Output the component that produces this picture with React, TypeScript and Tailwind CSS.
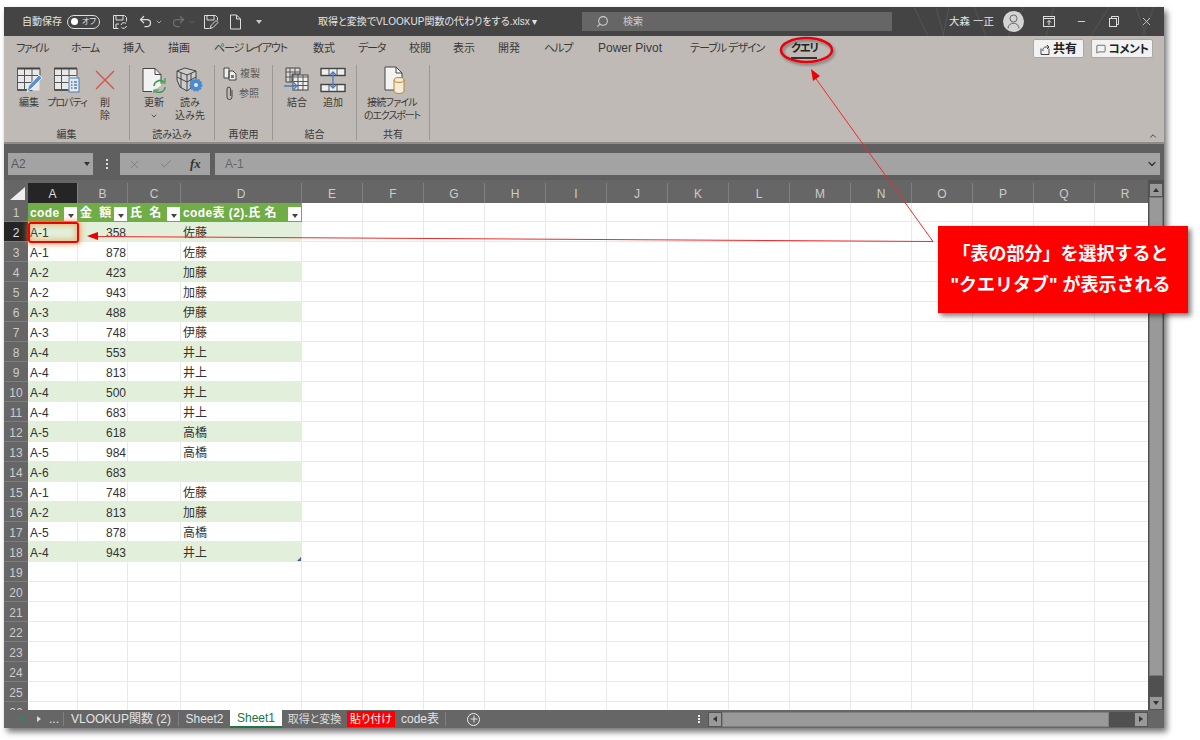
import React from "react";
import { ChevronDown, ChevronUp, Search, X, Check, Minus, Undo2, Redo2, MessageSquare, Plus } from "lucide-react";

const tabs = [
  { label: "ファイル", className: "w-[31px] ml-[12px] tracking-[-1.5px]" },
  { label: "ホーム", className: "w-[29px] ml-[24px] tracking-[-1.2px]" },
  { label: "挿入", className: "w-[22px] ml-[23px]" },
  { label: "描画", className: "w-[22px] ml-[23px]" },
  { label: "ページ レイアウト", className: "w-[74px] ml-[24px] tracking-[-1.2px]" },
  { label: "数式", className: "w-[22px] ml-[25px]" },
  { label: "データ", className: "w-[28px] ml-[23px] tracking-[-1.2px]" },
  { label: "校閲", className: "w-[22px] ml-[23px]" },
  { label: "表示", className: "w-[22px] ml-[22px]" },
  { label: "開発", className: "w-[22px] ml-[23px]" },
  { label: "ヘルプ", className: "w-[28px] ml-[24px] tracking-[-1px]" },
  { label: "Power Pivot", className: "w-[65px] ml-[26px] text-[12px]" },
  { label: "テーブル デザイン", className: "w-[76px] ml-[27px] tracking-[-1px]" },
];

const cols = [
  { name: "A", className: "w-[50px]" },
  { name: "B", className: "w-[50px]" },
  { name: "C", className: "w-[53px]" },
  { name: "D", className: "w-[121px]" },
  ..."EFGHIJKLMNOPQR".split("").map((name) => ({ name, className: "w-[61px]" })),
];

const rows: [string, string, string][] = [
  ["A-1", "358", "佐藤"],
  ["A-1", "878", "佐藤"],
  ["A-2", "423", "加藤"],
  ["A-2", "943", "加藤"],
  ["A-3", "488", "伊藤"],
  ["A-3", "748", "伊藤"],
  ["A-4", "553", "井上"],
  ["A-4", "813", "井上"],
  ["A-4", "500", "井上"],
  ["A-4", "683", "井上"],
  ["A-5", "618", "高橋"],
  ["A-5", "984", "高橋"],
  ["A-6", "683", ""],
  ["A-1", "748", "佐藤"],
  ["A-2", "813", "加藤"],
  ["A-5", "878", "高橋"],
  ["A-4", "943", "井上"],
];

const gridColor = "border-[#e9e9e9]";

function FilterButton() {
  return (
    <span className="absolute right-[1px] top-[4px] flex h-[14px] w-[13px] items-center justify-center bg-white">
      <span className="mt-[3px] h-0 w-0 border-x-[3.5px] border-t-[4px] border-x-transparent border-t-[#444]" />
    </span>
  );
}

function HeaderCell({ label, className }: { label: string; className: string }) {
  return (
    <div className={`relative flex h-full shrink-0 items-center bg-[#70ad47] pl-[2px] text-[12px] font-bold tracking-[0.4px] text-white ${className}`}>
      <span className="whitespace-nowrap">{label}</span>
      <FilterButton />
    </div>
  );
}

function RowHead({ n, active }: { n: number; active?: boolean }) {
  return (
    <div className={`flex h-full w-[24px] shrink-0 items-center justify-center border-b border-[#7d7d7d] pt-[2px] text-[12px] ${active ? "bg-[#252525] text-[#ddd]" : "bg-[#666] text-[#ccc]"}`}>
      {n}
    </div>
  );
}

function EmptyCells() {
  return (
    <>
      {cols.slice(4).map((c) => (
        <div key={c.name} className={`h-full shrink-0 border-r border-b ${gridColor} ${c.className}`} />
      ))}
    </>
  );
}

function EditIcon() {
  return (
    <svg width="26" height="26" viewBox="0 0 26 26" fill="none">
      <rect x="1.500" y="1.500" width="22" height="22" fill="#e9e9e9" />
      <path d="M1 1.500h23" stroke="#444" strokeWidth="2" />
      <path d="M1.500 1.500v22h15M24 1.500v7M1.500 8.500h22M1.500 15.500h17M1.500 22.500h12M8.500 2v20M16 2v15" stroke="#555" />
      <path d="M11 25l1.500-6L23 8l3 3-10.500 10.500z" fill="#5b8fd0" stroke="#fff" strokeWidth="0.800" />
    </svg>
  );
}

function PropsIcon() {
  return (
    <svg width="28" height="26" viewBox="0 0 28 26" fill="none">
      <rect x="1.500" y="1.500" width="22" height="22" fill="#e9e9e9" />
      <path d="M1 1.500h23" stroke="#444" strokeWidth="2" />
      <path d="M1.500 1.500v22h14M24 1.500v8M1.500 8.500h22M1.500 15.500h14M1.500 22.500h14M8.500 2v20M16 2v8" stroke="#555" />
      <rect x="16" y="11" width="10" height="14" fill="#e8e8e8" stroke="#4a7ebb" />
      <path d="M18 15h1.500M18 18h1.500M18 21h1.500M21 15h3M21 18h3M21 21h3" stroke="#4a7ebb" strokeWidth="1.300" />
    </svg>
  );
}

function RefreshIcon() {
  return (
    <svg width="26" height="26" viewBox="0 0 26 26" fill="none">
      <path d="M2 1.500h12l6 6v11l-9 6H2z" fill="#f2f2f2" />
      <path d="M2 1.500h12l6 6v8M14 1.500v6h6M2 1.500v23h9" stroke="#444" />
      <path d="M13 19a6 6 0 0 1 10-4M24 20a6 6 0 0 1-10 4" stroke="#3f9c4f" strokeWidth="1.600" />
      <path d="M24 11v5h-5M13 28v-5h5" stroke="#3f9c4f" strokeWidth="1.200" />
    </svg>
  );
}

function CubeIcon() {
  return (
    <svg width="28" height="26" viewBox="0 0 28 26" fill="none">
      <path d="M1 4l8-3 11 3v13l-9 7-7-4-3-7z" fill="#ccc" stroke="#444" />
      <path d="M1 4l10 4 9-4M11 8v16M1 10l10 5 9-5M5 6v15M15 6v15" stroke="#444" />
      <circle cx="20" cy="18" r="5.500" fill="#4a8bd0" stroke="#4a8bd0" strokeDasharray="2 1" strokeWidth="2" />
      <circle cx="20" cy="18" r="2" fill="#e8e8e8" />
    </svg>
  );
}

function MergeIcon() {
  return (
    <svg width="26" height="26" viewBox="0 0 26 26" fill="none">
      <path d="M2 1h14v6H8v8H2z" fill="#d8d8d8" stroke="#444" />
      <path d="M2 5h14M2 10h6M6 1v14M11 1v6" stroke="#555" />
      <rect x="9" y="8" width="15" height="15" fill="#eee" stroke="#444" />
      <path d="M9 10h15M9 14.500h15M9 18.500h15M14 8v15M19 8v15" stroke="#555" />
      <path d="M0 19h12M9 15l4 4-4 4" stroke="#4a7ebb" strokeWidth="1.300" />
    </svg>
  );
}

function AppendIcon() {
  return (
    <svg width="26" height="26" viewBox="0 0 26 26" fill="none">
      <rect x="1" y="1.500" width="24" height="7" fill="#eee" stroke="#444" strokeWidth="1.400" />
      <rect x="1" y="17.500" width="24" height="7" fill="#eee" stroke="#444" strokeWidth="1.400" />
      <path d="M9 2v6M17 2v6M9 18v6M17 18v6" stroke="#555" />
      <path d="M13 5v16M10 8l3-3 3 3M10 18l3 3 3-3" stroke="#4a7ebb" strokeWidth="1.300" />
    </svg>
  );
}

function ExportIcon() {
  return (
    <svg className="ml-[3px]" width="28" height="28" viewBox="0 0 28 28" fill="none">
      <path d="M5 1h11l6 6v17H5z" fill="#f4f4f4" />
      <path d="M5 1h11l6 6v5M16 1v6h6M5 1v23h9" stroke="#444" />
      <path d="M14 14v11c0 1.500 2.500 2.500 5 2.500s5-1 5-2.500V14z" fill="#f4ecd9" stroke="#b8862d" />
      <ellipse cx="19" cy="14" rx="5" ry="2.400" fill="#f4ecd9" stroke="#b8862d" />
    </svg>
  );
}

function RibbonButton({ icon, lines, width }: { icon: React.ReactNode; lines: React.ReactNode[]; width: string }) {
  return (
    <div className={`flex flex-col items-center ${width}`}>
      <div className="mt-[2px] flex h-[26px] items-center justify-center">{icon}</div>
      <div className="mt-[3px] text-center text-[10px] leading-[13px] text-[#3a3a3a]">
        {lines.map((l, i) => (
          <div key={i} className="whitespace-nowrap">{l}</div>
        ))}
      </div>
    </div>
  );
}

function RibbonGroup({ title, width, pad, children }: { title: string; width: string; pad: string; children: React.ReactNode }) {
  return (
    <div className={`mt-[1px] flex h-[75px] shrink-0 flex-col border-r border-[#9b9793] ${width}`}>
      <div className={`flex h-[64px] shrink-0 ${pad}`}>{children}</div>
      <div className="text-center text-[10px] leading-[12px] text-[#3a3a3a]">{title}</div>
    </div>
  );
}

export default function App() {
  return (
    <div className="relative h-[740px] w-[1200px] overflow-hidden bg-white pl-[4px] pt-[7px] font-['Liberation_Sans','Noto_Sans_CJK_JP',sans-serif] [font-feature-settings:'palt']">
      <div className="flex h-[721px] w-[1160px] flex-col overflow-hidden bg-[#666] shadow-[3px_4px_6px_rgba(0,0,0,0.55)]">
        {/* Title bar */}
        <div className="relative flex h-[29px] shrink-0 items-center bg-[#444444] text-[10px] text-[#e4e4e4]">
          <svg className="absolute right-0 top-0" width="260" height="29" fill="none" stroke="#555">
            <path d="M10 0l14 29M32 0l8 29M45 0l-6 29M70 0l12 29M120 0l-16 29M150 0l-8 29M205 0l-18 29M232 0l10 29M250 0l-12 29" />
          </svg>
          <span className="relative ml-[18px] w-[38px] whitespace-nowrap">自動保存</span>
          <span className="relative ml-[7px] flex h-[14px] w-[33px] items-center rounded-full border border-[#ddd] pl-[3px]">
            <span className="h-[7px] w-[7px] rounded-full bg-white" />
            <span className="ml-[4px] text-[8px] leading-none">オフ</span>
          </span>
          <svg className="ml-[12px]" width="16" height="16" viewBox="0 0 16 16" fill="none" stroke="#ddd">
            <path d="M1.500 1.500h11l2 2v4M1.500 1.500v13h5M4 2v4h7V2M4 14v-4h3" />
            <path d="M9 11a3 3 0 0 1 5-1.500M14.500 12a3 3 0 0 1-5 1.500" />
          </svg>
          <Undo2 className="ml-[10px] text-[#ddd]" size={15} />
          <ChevronDown className="ml-[2px] text-[#ddd]" size={8} />
          <Redo2 className="ml-[8px] text-[#6f6f6f]" size={15} />
          <ChevronDown className="ml-[2px] text-[#6f6f6f]" size={8} />
          <svg className="ml-[7px]" width="16" height="16" viewBox="0 0 16 16" fill="none" stroke="#ddd">
            <path d="M1.500 1.500h11l2 2v3M1.500 1.500v13h5M4 2v4h7V2" />
            <path d="M7 14.500l1-3 5-5 2 2-5 5z" />
          </svg>
          <svg className="ml-[10px]" width="13" height="16" viewBox="0 0 13 16" fill="none" stroke="#ddd">
            <path d="M1.500 1h6l4 4v10h-10zM7.500 1v4h4" />
          </svg>
          <span className="ml-[14px] h-0 w-0 border-x-[3px] border-t-[4px] border-x-transparent border-t-[#ccc]" />
          <span className="relative ml-[56px] w-[214px] whitespace-nowrap text-[10px]">取得と変換でVLOOKUP関数の代わりをする.xlsx ▾</span>
          <div className="relative ml-[50px] flex h-[19px] w-[310px] items-center bg-[#666] text-[#cfcfcf]">
            <Search className="ml-[14px] -scale-x-100" size={13} />
            <span className="ml-[14px]">検索</span>
          </div>
          <span className="relative ml-[57px] w-[38px] whitespace-nowrap text-[10.500px]">大森 一正</span>
          <span className="relative ml-[16px] flex h-[21px] w-[21px] items-center justify-center rounded-full bg-[#d4d4d4]">
            <svg width="13" height="15" viewBox="0 0 13 15" fill="none" stroke="#666">
              <circle cx="6.500" cy="4.500" r="3.500" />
              <path d="M1 14.500c0-7 11-7 11 0" />
            </svg>
          </span>
          <svg className="relative ml-[19px]" width="12" height="11" viewBox="0 0 12 11" fill="none" stroke="#ddd">
            <rect x="0.500" y="0.500" width="11" height="10" />
            <path d="M0.500 2.500h11M6 9V4.500M4 6.500l2-2 2 2" />
          </svg>
          <Minus className="relative ml-[21px] text-[#ddd]" size={11} />
          <svg className="relative ml-[22px]" width="10" height="11" viewBox="0 0 10 11" fill="none" stroke="#ddd">
            <rect x="0.500" y="2.500" width="7" height="8" />
            <path d="M2.500 2.500v-2h7v8h-2" />
          </svg>
          <X className="relative ml-[21px] text-[#ddd]" size={13} strokeWidth={1.500} />
        </div>

        {/* Tab row */}
        <div className="flex h-[28px] shrink-0 items-start bg-[#bfbab6] pt-[4px] text-[11px] leading-[16px] text-[#3a3a3a]">
          {tabs.map((t) => (
            <span key={t.label} className={`whitespace-nowrap ${t.className}`}>{t.label}</span>
          ))}
          <span className="relative ml-[25px] w-[26px] whitespace-nowrap font-bold tracking-[-1px] text-[#222]">
            クエリ
            <span className="absolute left-0 right-0 top-[17px] h-[2px] bg-[#333]" />
          </span>
          <button className="-mt-[1px] ml-[216px] flex h-[19px] w-[51px] items-center justify-center gap-[3px] rounded-[2px] border border-[#a8a8a8] bg-[#f2f2f2] text-[12px] font-bold text-[#222]">
            <svg width="10" height="12" viewBox="0 0 10 12" fill="none" stroke="#444">
              <path d="M1 5.500v6h8v-6M3 8a3 3 0 0 1 3-4h3M7 2l2 2-2 2" />
            </svg>
            共有
          </button>
          <button className="-mt-[1px] ml-[7px] flex h-[19px] w-[62px] items-center justify-center gap-[3px] rounded-[2px] border border-[#a8a8a8] bg-[#f2f2f2] text-[11.500px] font-bold tracking-[-0.500px] text-[#222]">
            <MessageSquare size={10} strokeWidth={1.500} />
            コメント
          </button>
        </div>

        {/* Ribbon */}
        <div className="relative flex h-[80px] shrink-0 items-start border-b-2 border-[#8f8c89] bg-[#bfbab6]">
          <RibbonGroup title="編集" width="w-[126px]" pad="pl-[6px]">
            <RibbonButton width="w-[38px]" icon={<EditIcon />} lines={["編集"]} />
            <RibbonButton width="w-[38px]" icon={<PropsIcon />} lines={[<span key="p" className="tracking-[-1px]">プロパティ</span>]} />
            <RibbonButton
              width="w-[38px]"
              icon={
                <svg width="22" height="22" viewBox="0 0 22 22" stroke="#d2524a" strokeWidth="1.300">
                  <path d="M2 2l18 18M20 2L2 20" />
                </svg>
              }
              lines={["削", "除"]}
            />
          </RibbonGroup>
          <RibbonGroup title="読み込み" width="w-[85px]" pad="pl-[6px]">
            <RibbonButton width="w-[36px]" icon={<RefreshIcon />} lines={["更新", <ChevronDown key="c" className="mx-auto mt-[3px]" size={8} strokeWidth={2.500} />]} />
            <RibbonButton width="w-[36px]" icon={<CubeIcon />} lines={["読み", "込み先"]} />
          </RibbonGroup>
          <RibbonGroup title="再使用" width="w-[58px]" pad="pl-[8px]">
            <div className="flex flex-col gap-[5px] pt-[1px] text-[10px] text-[#5a5a5a]">
              <div className="flex h-[15px] items-center gap-[3px]">
                <svg width="14" height="14" viewBox="0 0 14 14" fill="none" stroke="#444">
                  <path d="M1 1h5v10H1zM6 4h4l3 3v6H6z" fill="#eee" />
                  <rect x="8" y="8" width="3" height="3" fill="#777" stroke="none" />
                </svg>
                複製
              </div>
              <div className="flex h-[15px] items-center gap-[5px] pl-[2px]">
                <svg width="9" height="15" viewBox="0 0 9 15" fill="none" stroke="#444">
                  <path d="M7 4v7a2.500 2.500 0 0 1-5 0V3a1.800 1.800 0 0 1 3.600 0v7" />
                </svg>
                参照
              </div>
            </div>
          </RibbonGroup>
          <RibbonGroup title="結合" width="w-[84px]" pad="pl-[6px]">
            <RibbonButton width="w-[36px]" icon={<MergeIcon />} lines={["結合"]} />
            <RibbonButton width="w-[36px]" icon={<AppendIcon />} lines={["追加"]} />
          </RibbonGroup>
          <RibbonGroup title="共有" width="w-[73px]" pad="pl-[5px]">
            <RibbonButton
              width="w-[60px]"
              icon={<ExportIcon />}
              lines={[
                <span key="a" className="tracking-[-0.800px]">接続ファイル</span>,
                <span key="b" className="tracking-[-1.100px]">のエクスポート</span>,
              ]}
            />
          </RibbonGroup>
          <ChevronUp className="absolute bottom-[1px] right-[6px] text-[#333]" size={10} />
        </div>

        {/* Formula bar */}
        <div className="flex h-[36px] shrink-0 items-center bg-[#5f5f5f] pt-[4px] text-[12px] text-[#6a6a6a]">
          <div className="ml-[4px] flex h-[22px] w-[85px] items-center justify-between bg-[#a3a3a3] pl-[3px] pr-[3px]">
            <span className="text-[#5a5a5a]">A2</span>
            <span className="h-0 w-0 border-x-[3.500px] border-t-[4px] border-x-transparent border-t-[#333]" />
          </div>
          <div className="ml-[11px] flex w-[5px] flex-col items-center gap-[2px]">
            <span className="h-[2px] w-[2px] bg-[#ddd]" />
            <span className="h-[2px] w-[2px] bg-[#ddd]" />
            <span className="h-[2px] w-[2px] bg-[#ddd]" />
          </div>
          <div className="ml-[11px] flex h-[22px] w-[90px] items-center bg-[#a3a3a3] text-[#777]">
            <X className="ml-[8px]" size={13} strokeWidth={1.500} />
            <Check className="ml-[18px]" size={14} strokeWidth={1.500} />
            <span className="ml-[17px] font-['Liberation_Serif',serif] text-[13px] font-bold italic text-[#333]">fx</span>
          </div>
          <div className="ml-[5px] flex h-[22px] w-[945px] items-center justify-between bg-[#a3a3a3] pl-[10px] pr-[2px]">
            <span className="text-[#666]">A-1</span>
            <ChevronDown className="text-[#333]" size={12} strokeWidth={2.500} />
          </div>
        </div>

        {/* Sheet */}
        <div className="flex min-h-0 flex-1">
          <div className="flex w-[1144px] shrink-0 flex-col overflow-hidden">
            <div className="h-[3px] shrink-0 bg-[#666]" />
            <div className="flex h-[20px] shrink-0 bg-[#666] text-[12px] text-[#ccc]">
              <div className="flex h-full w-[24px] shrink-0 items-end justify-end pb-[3px] pr-[3px]">
                <span className="h-0 w-0 border-b-[13px] border-l-[15px] border-b-[#eee] border-l-transparent" />
              </div>
              {cols.map((c) => (
                <div
                  key={c.name}
                  className={`flex h-full shrink-0 items-center justify-center border-r border-[#808080] pt-[2px] ${c.className} ${c.name === "A" ? "bg-[#252525] text-[#ddd]" : ""}`}
                >
                  {c.name}
                </div>
              ))}
            </div>
            <div className="flex h-[507px] flex-col overflow-hidden bg-white text-[12px] text-[#333]">
              <div className="flex h-[19px] shrink-0">
                <RowHead n={1} />
                <HeaderCell label="code" className="w-[50px]" />
                <HeaderCell label="金 額" className="w-[50px] [word-spacing:3px]" />
                <HeaderCell label="氏 名" className="w-[53px] [word-spacing:3px]" />
                <HeaderCell label="code表 (2).氏 名" className="w-[121px]" />
                <EmptyCells />
              </div>
              {rows.map((r, i) => {
                const band = i % 2 === 0 ? "bg-[#e2efda] border-[#e2efda]" : `bg-white ${gridColor}`;
                return (
                  <div key={i} className="flex h-[20px] shrink-0">
                    <RowHead n={i + 2} active={i === 0} />
                    <div className={`flex h-full w-[50px] shrink-0 items-center border-r border-b pl-[2px] pt-[2px] ${band}`}>{r[0]}</div>
                    <div className={`flex h-full w-[50px] shrink-0 items-center justify-end border-r border-b pr-[1px] pt-[2px] ${band}`}>{r[1]}</div>
                    <div className={`h-full w-[53px] shrink-0 border-r border-b ${band}`} />
                    <div className={`relative flex h-full w-[121px] shrink-0 items-center border-r border-b pl-[2px] pt-[2px] ${band}`}>
                      {r[2]}
                      {i === rows.length - 1 && (
                        <span className="absolute bottom-0 right-0 h-0 w-0 border-b-[4px] border-l-[4px] border-b-[#3b5fa8] border-l-transparent" />
                      )}
                    </div>
                    <EmptyCells />
                  </div>
                );
              })}
              {[19, 20, 21, 22, 23, 24, 25, 26].map((n) => (
                <div key={n} className="flex h-[20px] shrink-0">
                  <RowHead n={n} />
                  {cols.slice(0, 4).map((c) => (
                    <div key={c.name} className={`h-full shrink-0 border-r border-b ${gridColor} ${c.className}`} />
                  ))}
                  <EmptyCells />
                </div>
              ))}
            </div>
          </div>

          {/* Vertical scrollbar */}
          <div className="flex w-[16px] flex-col items-center bg-[#505050] pt-[3px]">
            <div className="flex h-[14px] w-[14px] items-center justify-center border border-[#555] bg-[#999]">
              <span className="h-0 w-0 border-x-[3.500px] border-b-[4px] border-x-transparent border-b-[#333]" />
            </div>
            <div className="h-[479px] w-[14px] border border-[#777] bg-[#999]" />
            <div className="mt-auto flex h-[14px] w-[14px] items-center justify-center border border-[#555] bg-[#999]">
              <span className="h-0 w-0 border-x-[3.500px] border-t-[4px] border-x-transparent border-t-[#333]" />
            </div>
          </div>
        </div>

        {/* Sheet tabs */}
        <div className="flex h-[18px] shrink-0 items-center bg-[#666] text-[12px] text-[#e4e4e4]">
          <span className="ml-[15px] h-0 w-0 border-y-[3.500px] border-r-[4px] border-y-transparent border-r-[#2e8b57]" />
          <span className="ml-[14px] h-0 w-0 border-y-[3.500px] border-l-[4px] border-y-transparent border-l-[#ddd]" />
          <span className="ml-[8px] w-[14px]">...</span>
          <span className="h-[14px] w-px bg-[#808080]" />
          <span className="w-[114px] whitespace-nowrap text-center">VLOOKUP関数 (2)</span>
          <span className="h-[14px] w-px bg-[#808080]" />
          <span className="w-[51px] text-center">Sheet2</span>
          <span className="flex h-full w-[52px] items-center justify-center border-b-2 border-[#217346] bg-white text-[#217346]">Sheet1</span>
          <span className="w-[65px] whitespace-nowrap text-center text-[11px] text-[#ddd]">取得と変換</span>
          <span className="flex h-[16px] w-[48px] items-center justify-center whitespace-nowrap bg-[#ff0000] text-[11px] text-white">貼り付け</span>
          <span className="w-[50px] whitespace-nowrap text-center">code表</span>
          <span className="h-[14px] w-px bg-[#808080]" />
          <span className="ml-[21px] flex h-[13px] w-[13px] items-center justify-center rounded-full border border-[#eee]">
            <Plus size={10} strokeWidth={2.500} />
          </span>
          <div className="ml-[218px] flex w-[3px] flex-col gap-[1px]">
            <span className="h-[2px] w-[2px] bg-[#eee]" />
            <span className="h-[2px] w-[2px] bg-[#eee]" />
            <span className="h-[2px] w-[2px] bg-[#eee]" />
          </div>
          <div className="ml-[7px] flex h-[15px] w-[440px] items-center bg-[#505050]">
            <div className="flex h-full w-[14px] items-center justify-center border border-[#555] bg-[#999]">
              <span className="h-0 w-0 border-y-[3.500px] border-r-[4px] border-y-transparent border-r-[#333]" />
            </div>
            <div className="h-full w-[387px] border border-[#808080] bg-[#999]" />
            <div className="ml-auto flex h-full w-[14px] items-center justify-center border border-[#555] bg-[#999]">
              <span className="h-0 w-0 border-y-[3.500px] border-l-[4px] border-y-transparent border-l-[#333]" />
            </div>
          </div>
        </div>
      </div>

      {/* Annotation arrows */}
      <svg className="pointer-events-none absolute left-0 top-0" width="1200" height="740" fill="none">
        <defs>
          <filter id="annShadow" x="-20%" y="-20%" width="140%" height="140%">
            <feDropShadow dx="1.500" dy="2" stdDeviation="1.500" floodOpacity="0.4" />
          </filter>
        </defs>
        <g filter="url(#annShadow)">
          <ellipse cx="806.500" cy="50" rx="25.500" ry="12" stroke="#e8000b" strokeWidth="2.500" />
        </g>
        <path d="M933 241.500L95 236.500" stroke="#ee2a2a" strokeWidth="1" />
        <path d="M87 236l11-4v8z" fill="#ee0000" />
        <path d="M933 241.500L814 76" stroke="#ee2a2a" strokeWidth="1" />
        <path d="M811 69l9 7-7 5z" fill="#ee0000" />
      </svg>

      {/* Selected cell marker */}
      <div className="absolute left-[28px] top-[222px] h-[21px] w-[51px] rounded-[3px] border-2 border-[#f00000] shadow-[0_0_5px_2px_rgba(240,130,40,0.55),inset_0_0_5px_2px_rgba(240,130,40,0.45)]" />

      {/* Callout */}
      <div className="absolute left-[938px] top-[226px] flex h-[87px] w-[250px] flex-col items-center justify-center gap-[9px] bg-[#ff0000] pr-[5px] text-[18px] font-bold leading-[22px] text-white shadow-[3px_3px_5px_rgba(0,0,0,0.5)] [font-feature-settings:normal]">
        <div className="whitespace-nowrap">「表の部分」を選択すると</div>
        <div className="whitespace-nowrap">"クエリタブ" が表示される</div>
      </div>
    </div>
  );
}
